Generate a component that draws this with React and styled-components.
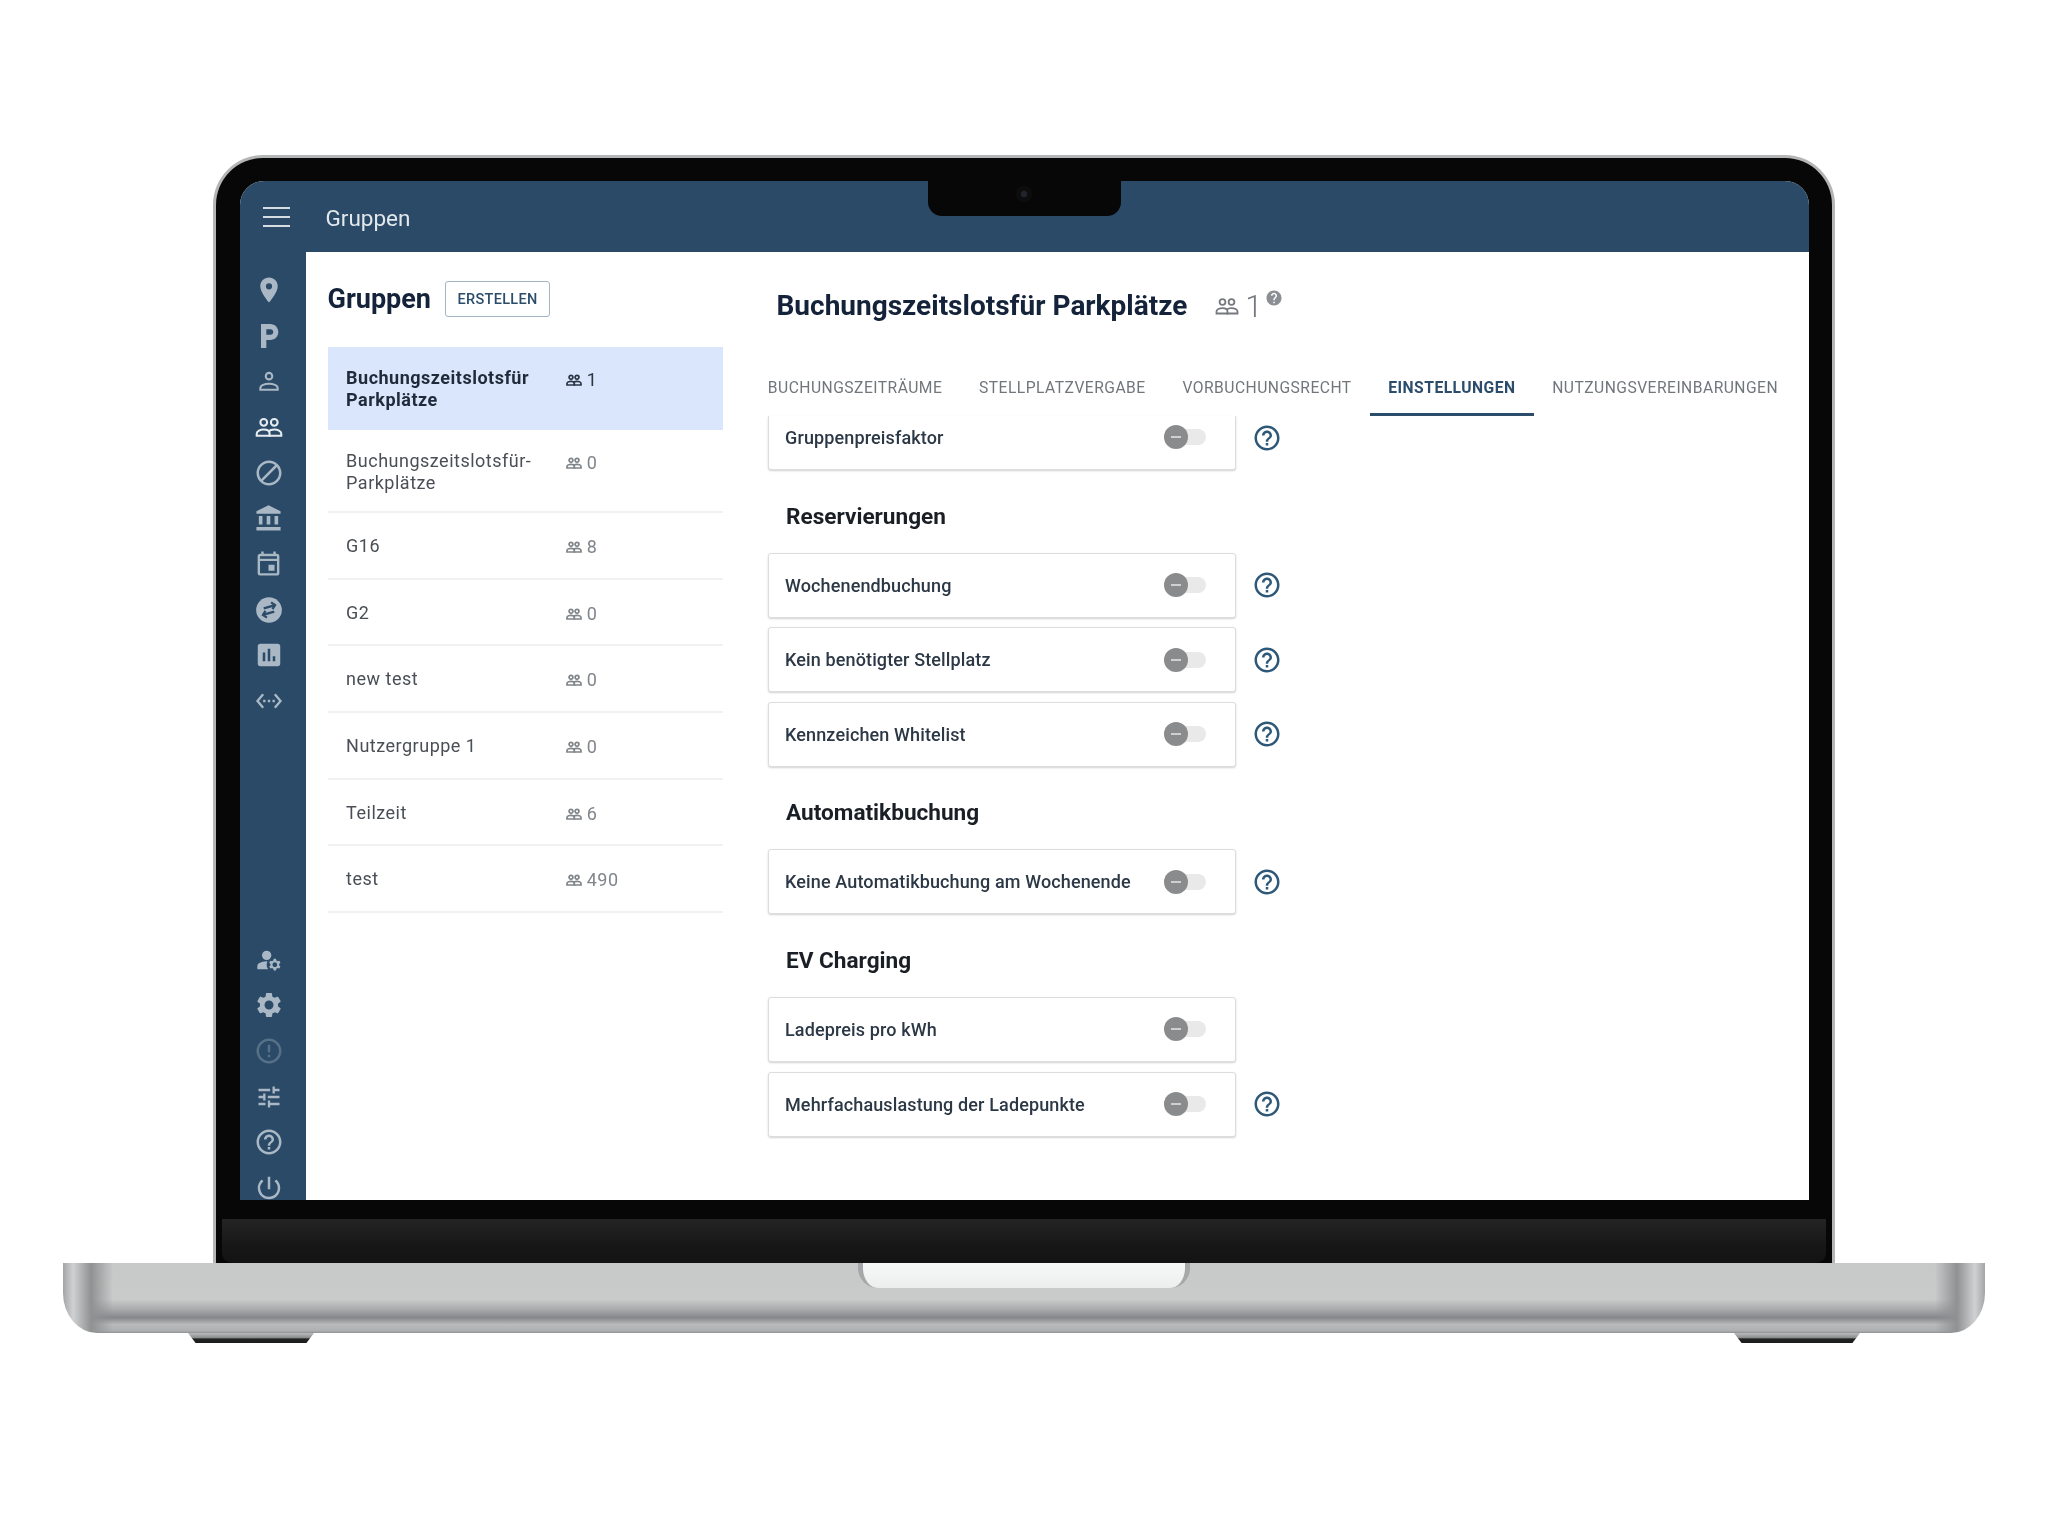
import React from "react";
import styled, { createGlobalStyle } from "styled-components";
import {
  MdPlace,
  MdLocalParking,
  MdBlock,
  MdAccountBalance,
  MdOutlineEvent,
  MdAssessment,
  MdSettingsEthernet,
  MdManageAccounts,
  MdSettings,
  MdErrorOutline,
  MdTune,
  MdHelpOutline,
  MdHelp,
  MdPowerSettingsNew,
} from "react-icons/md";

const GlobalStyle = createGlobalStyle`
  html, body {
    margin: 0;
    background: #fff;
    font-family: Roboto, "Liberation Sans", sans-serif;
  }
`;

const Page = styled.div`
  width: 2048px;
  height: 1536px;
  padding-top: 155px;
  box-sizing: border-box;
  display: flex;
  flex-direction: column;
  align-items: center;
  overflow: hidden;
  background: #fff;
`;

const Lid = styled.div`
  width: 1622px;
  height: 1108px;
  box-sizing: border-box;
  flex: none;
  display: flex;
  flex-direction: column;
  align-items: center;
  background: #070707;
  border: solid #b4b5b6;
  border-width: 3px 3px 0;
  border-radius: 50px 50px 0 0;
  padding-top: 23px;
  overflow: hidden;
`;

const Screen = styled.div`
  position: relative;
  width: 1569px;
  height: 1019px;
  flex: none;
  display: flex;
  flex-direction: column;
  border-radius: 24px 24px 0 0;
  overflow: hidden;
  background: #fff;
  filter: blur(0.6px);
`;

const Notch = styled.div`
  position: absolute;
  top: 0;
  left: 688px;
  width: 193px;
  height: 35px;
  border-radius: 0 0 14px 14px;
  background: #070707;
  display: flex;
  align-items: center;
  justify-content: center;
`;

const Camera = styled.span`
  width: 16px;
  height: 16px;
  margin-top: -10px;
  border-radius: 50%;
  background: radial-gradient(circle, #20242c 0 25%, #0d0d0f 30% 100%);
`;

const Chin = styled.div`
  margin-top: 19px;
  width: 1604px;
  flex: 1;
  border-radius: 0 0 10px 10px;
  background: linear-gradient(#242424, #171717 60%, #131313);
`;

const Base = styled.div`
  position: relative;
  width: 1922px;
  height: 70px;
  flex: none;
  border-radius: 0 0 34px 34px / 0 0 40px 40px;
  background:
    linear-gradient(
      to right,
      #a3a5a6 0,
      #d0d1d2 10px,
      #8f9192 28px,
      rgba(200, 202, 202, 0) 50px,
      rgba(200, 202, 202, 0) calc(100% - 50px),
      #8f9192 calc(100% - 28px),
      #d0d1d2 calc(100% - 10px),
      #a3a5a6 100%
    ),
    linear-gradient(#c7c9c9 0, #c9cbcb 52%, #a9abac 66%, #85878a 78%, #b8babb 88%, #adafb0 97%, #8f9192 100%);
`;

const Trackpad = styled.div`
  position: absolute;
  top: 0;
  left: 795px;
  width: 332px;
  height: 25px;
  box-sizing: border-box;
  border: solid #a5a7a8;
  border-width: 0 5px;
  border-radius: 0 0 20px 20px;
  background: linear-gradient(#f7f8f8, #eceded);
`;

const Feet = styled.div`
  width: 1672px;
  flex: none;
  display: flex;
  justify-content: space-between;
`;

const Foot = styled.div`
  width: 126px;
  height: 10px;
  clip-path: polygon(0 0, 100% 0, 94% 100%, 6% 100%);
  background: linear-gradient(#b9bbbc 0, #8d8f90 45%, #222 60%, #1b1b1b 100%);
`;

const TopBar = styled.header`
  height: 71px;
  flex: none;
  display: flex;
  align-items: center;
  padding: 2px 0 0 23px;
  box-sizing: border-box;
  gap: 36px;
  background: #2a4a67;
  color: #e3e8ec;
  font-size: 22.5px;
`;

const Burger = styled.svg`
  width: 27px;
  height: 24px;
  flex: none;
  margin-top: -2px;
`;

const Body = styled.div`
  flex: 1;
  min-height: 0;
  display: flex;
`;

const Sidebar = styled.nav`
  width: 66px;
  flex: none;
  margin-bottom: -11px;
  padding: 15px 8px 0 0;
  box-sizing: border-box;
  display: flex;
  flex-direction: column;
  justify-content: space-between;
  background: #2a4a67;
`;

const NavGroup = styled.div`
  display: flex;
  flex-direction: column;
`;

const NavItem = styled.div`
  height: 45.7px;
  display: flex;
  align-items: center;
  justify-content: center;
  color: ${(p) => (p.$active ? "#e6ebef" : "#a9b8c4")};
  opacity: ${(p) => (p.$faded ? 0.35 : 1)};
`;

const ListColumn = styled.section`
  width: 395px;
  flex: none;
  margin-left: 22px;
  padding-top: 29px;
`;

const ListHead = styled.div`
  height: 36px;
  display: flex;
  align-items: center;
  gap: 14px;
  margin-bottom: 30px;
`;

const ListTitle = styled.h1`
  margin: 0;
  font-size: 27px;
  font-weight: 700;
  color: #14233a;
`;

const CreateButton = styled.button`
  width: 105px;
  height: 36px;
  padding: 0;
  border: 1px solid #a3b5c4;
  border-radius: 3px;
  background: #fff;
  color: #2b4c6a;
  font: 500 14.5px Roboto, sans-serif;
  letter-spacing: 0.3px;
`;

const GroupRow = styled.div`
  height: ${(p) => (p.$tall ? "83px" : "66.7px")};
  box-sizing: border-box;
  display: flex;
  padding: ${(p) => (p.$tall ? "20px 0 0 18.6px" : "1px 0 0 18.6px")};
  align-items: ${(p) => (p.$tall ? "flex-start" : "center")};
  background: ${(p) => (p.$active ? "#d9e6fb" : "transparent")};
  border-bottom: 2px solid ${(p) => (p.$active ? "transparent" : "#f0f1f2")};
  color: ${(p) => (p.$active ? "#1f2b3a" : "#4a4f55")};
  font-size: 18px;
  font-weight: ${(p) => (p.$active ? 700 : 400)};
  line-height: 22px;
  letter-spacing: 0.5px;
`;

const GroupName = styled.div`
  width: 219.6px;
  flex: none;
`;

const GroupCount = styled.div`
  display: flex;
  align-items: center;
  gap: 5px;
  margin-top: 2px;
  color: ${(p) => (p.$active ? "#2b3645" : "#80858a")};
  font-weight: 400;
`;

const DetailColumn = styled.section`
  flex: 1;
  min-width: 0;
  margin-left: 27px;
`;

const DetailHead = styled.div`
  height: 108px;
  box-sizing: border-box;
  padding: 34px 0 0 27px;
  display: flex;
  align-items: flex-start;
`;

const DetailTitle = styled.h2`
  margin: 0;
  font-size: 28px;
  line-height: 40px;
  font-weight: 700;
  color: #14233a;
`;

const DetailCount = styled.div`
  margin-left: 28px;
  height: 40px;
  display: flex;
  align-items: center;
  gap: 6px;
  font-size: 31px;
  font-weight: 300;
  color: #75797e;
`;

const SmallHelp = styled(MdHelp)`
  margin: -16px 0 0 -4px;
  color: #8b8f93;
`;

const Tabs = styled.div`
  height: 56px;
  display: flex;
`;

const Tab = styled.div`
  height: 56px;
  box-sizing: border-box;
  padding: 2px 18.35px 0;
  display: flex;
  align-items: center;
  font-size: 15.65px;
  letter-spacing: 0.47px;
  font-weight: ${(p) => (p.$active ? 700 : 400)};
  color: ${(p) => (p.$active ? "#2b4c6a" : "#71767b")};
  border-bottom: 3px solid ${(p) => (p.$active ? "#2b4c6a" : "transparent")};
`;

const SettingsPane = styled.div`
  margin-left: 18px;
  display: flex;
  flex-direction: column;
`;

const SettingsGroup = styled.div`
  display: flex;
  flex-direction: column;
  gap: 9.7px;
`;

const SectionTitle = styled.h3`
  margin: 33.5px 0 23px 18.5px;
  height: 26px;
  line-height: 26px;
  font-size: 22.6px;
  font-weight: 700;
  color: #1a1f26;
`;

const SettingRow = styled.div`
  display: flex;
  align-items: center;
  gap: 16px;
`;

const SettingCard = styled.div`
  width: 468px;
  height: ${(p) => (p.$clipped ? "54px" : "65px")};
  box-sizing: border-box;
  padding: ${(p) => (p.$clipped ? "0 29px 11px 16.5px" : "0 29px 0 16.5px")};
  display: flex;
  align-items: center;
  justify-content: space-between;
  background: #fff;
  border: 1px solid #dcdddf;
  border-top: ${(p) => (p.$clipped ? "none" : "1px solid #dcdddf")};
  border-radius: ${(p) => (p.$clipped ? "0 0 3px 3px" : "3px")};
  box-shadow: 0 1px 2px rgba(0, 0, 0, 0.18);
  font-size: 18px;
  font-weight: 500;
  letter-spacing: 0.13px;
  color: #2c3846;
`;

const Switch = styled.span`
  width: 42px;
  height: 16px;
  display: flex;
  align-items: center;
  border-radius: 8px;
  background: #e9e9ea;
`;

const Knob = styled.span`
  width: 24px;
  height: 24px;
  display: flex;
  align-items: center;
  justify-content: center;
  border-radius: 50%;
  background: #8a8b8c;

  &::after {
    content: "";
    width: 10px;
    height: 2px;
    background: #cfd0d1;
  }
`;

const HelpSlot = styled.span`
  width: 30px;
  height: 30px;
  display: flex;
  margin-bottom: ${(p) => (p.$clipped ? "11px" : "0")};
  color: #2e5878;
`;

function PersonIcon() {
  return (
    <svg width="26" height="26" viewBox="0 0 24 24" fill="none" stroke="currentColor" strokeWidth="1.9">
      <circle cx="12" cy="7.5" r="3" />
      <path d="M4 20v-1.5c0-2.6 4-4 8-4s8 1.4 8 4V20z" />
    </svg>
  );
}

function PeopleIcon({ size = 28, stroke = 1.8 }) {
  return (
    <svg width={size} height={size} viewBox="0 0 24 24" fill="none" stroke="currentColor" strokeWidth={stroke}>
      <circle cx="7.5" cy="8" r="2.9" />
      <circle cx="16.5" cy="8" r="2.9" />
      <path d="M1.5 19.5v-2c0-2 3-3.4 6-3.4s5 1.4 5 3.4v2z" />
      <path d="M11.5 19.5h11v-2c0-2-3-3.4-6-3.4-2 0-3.8.6-4.9 1.6" />
    </svg>
  );
}

function SwapIcon() {
  return (
    <svg width="28" height="28" viewBox="0 0 24 24">
      <circle cx="12" cy="12" r="11" fill="currentColor" />
      <g fill="none" stroke="#2a4a67" strokeWidth="1.9">
        <path d="M7.5 10.6l9-2.6" />
        <path d="M13.8 5.4l3.4 2.4-2.2 3.4" />
        <path d="M16.5 13.4l-9 2.6" />
        <path d="M10.2 18.6l-3.4-2.4 2.2-3.4" />
      </g>
    </svg>
  );
}

const topNav = [
  { icon: <MdPlace size={30} /> },
  { icon: <MdLocalParking size={32} /> },
  { icon: <PersonIcon /> },
  { icon: <PeopleIcon />, active: true },
  { icon: <MdBlock size={30} /> },
  { icon: <MdAccountBalance size={29} /> },
  { icon: <MdOutlineEvent size={29} /> },
  { icon: <SwapIcon /> },
  { icon: <MdAssessment size={30} /> },
  { icon: <MdSettingsEthernet size={28} /> },
];

const bottomNav = [
  { icon: <MdManageAccounts size={28} /> },
  { icon: <MdSettings size={30} /> },
  { icon: <MdErrorOutline size={30} />, faded: true },
  { icon: <MdTune size={28} /> },
  { icon: <MdHelpOutline size={30} /> },
  { icon: <MdPowerSettingsNew size={30} /> },
];

const groups = [
  { name: "Buchungszeitslotsfür Parkplätze", count: 1, tall: true, active: true },
  { name: "Buchungszeitslotsfür-Parkplätze", count: 0, tall: true },
  { name: "G16", count: 8 },
  { name: "G2", count: 0 },
  { name: "new test", count: 0 },
  { name: "Nutzergruppe 1", count: 0 },
  { name: "Teilzeit", count: 6 },
  { name: "test", count: 490 },
];

const tabs = ["Buchungszeiträume", "Stellplatzvergabe", "Vorbuchungsrecht", "Einstellungen", "Nutzungsvereinbarungen"];

const sections = [
  { title: "Reservierungen", items: [{ label: "Wochenendbuchung" }, { label: "Kein benötigter Stellplatz" }, { label: "Kennzeichen Whitelist" }] },
  { title: "Automatikbuchung", items: [{ label: "Keine Automatikbuchung am Wochenende" }] },
  { title: "EV Charging", items: [{ label: "Ladepreis pro kWh", noHelp: true }, { label: "Mehrfachauslastung der Ladepunkte" }] },
];

function Setting({ label, clipped, noHelp }) {
  return (
    <SettingRow>
      <SettingCard $clipped={clipped}>
        {label}
        <Switch>
          <Knob />
        </Switch>
      </SettingCard>
      {!noHelp && (
        <HelpSlot $clipped={clipped}>
          <MdHelpOutline size={30} />
        </HelpSlot>
      )}
    </SettingRow>
  );
}

export default function App() {
  return (
    <Page>
      <GlobalStyle />
      <Lid>
        <Screen>
          <TopBar>
            <Burger viewBox="0 0 27 24">
              <path d="M0 3h27M0 12h27M0 21h27" stroke="#d5dce2" strokeWidth="2" />
            </Burger>
            Gruppen
          </TopBar>
          <Body>
            <Sidebar>
              <NavGroup>
                {topNav.map((n, i) => (
                  <NavItem key={i} $active={n.active}>
                    {n.icon}
                  </NavItem>
                ))}
              </NavGroup>
              <NavGroup>
                {bottomNav.map((n, i) => (
                  <NavItem key={i} $faded={n.faded}>
                    {n.icon}
                  </NavItem>
                ))}
              </NavGroup>
            </Sidebar>
            <ListColumn>
              <ListHead>
                <ListTitle>Gruppen</ListTitle>
                <CreateButton>ERSTELLEN</CreateButton>
              </ListHead>
              {groups.map((g) => (
                <GroupRow key={g.name} $tall={g.tall} $active={g.active}>
                  <GroupName>{g.name}</GroupName>
                  <GroupCount $active={g.active}>
                    <PeopleIcon size={16} stroke={2.6} />
                    {g.count}
                  </GroupCount>
                </GroupRow>
              ))}
            </ListColumn>
            <DetailColumn>
              <DetailHead>
                <DetailTitle>Buchungszeitslotsfür Parkplätze</DetailTitle>
                <DetailCount>
                  <PeopleIcon size={24} stroke={1.8} />1
                  <SmallHelp size={18} />
                </DetailCount>
              </DetailHead>
              <Tabs>
                {tabs.map((t, i) => (
                  <Tab key={t} $active={i === 3}>
                    {t.toUpperCase()}
                  </Tab>
                ))}
              </Tabs>
              <SettingsPane>
                <Setting label="Gruppenpreisfaktor" clipped />
                {sections.map((s) => (
                  <React.Fragment key={s.title}>
                    <SectionTitle>{s.title}</SectionTitle>
                    <SettingsGroup>
                      {s.items.map((it) => (
                        <Setting key={it.label} label={it.label} noHelp={it.noHelp} />
                      ))}
                    </SettingsGroup>
                  </React.Fragment>
                ))}
              </SettingsPane>
            </DetailColumn>
          </Body>
          <Notch>
            <Camera />
          </Notch>
        </Screen>
        <Chin />
      </Lid>
      <Base>
        <Trackpad />
      </Base>
      <Feet>
        <Foot />
        <Foot />
      </Feet>
    </Page>
  );
}
